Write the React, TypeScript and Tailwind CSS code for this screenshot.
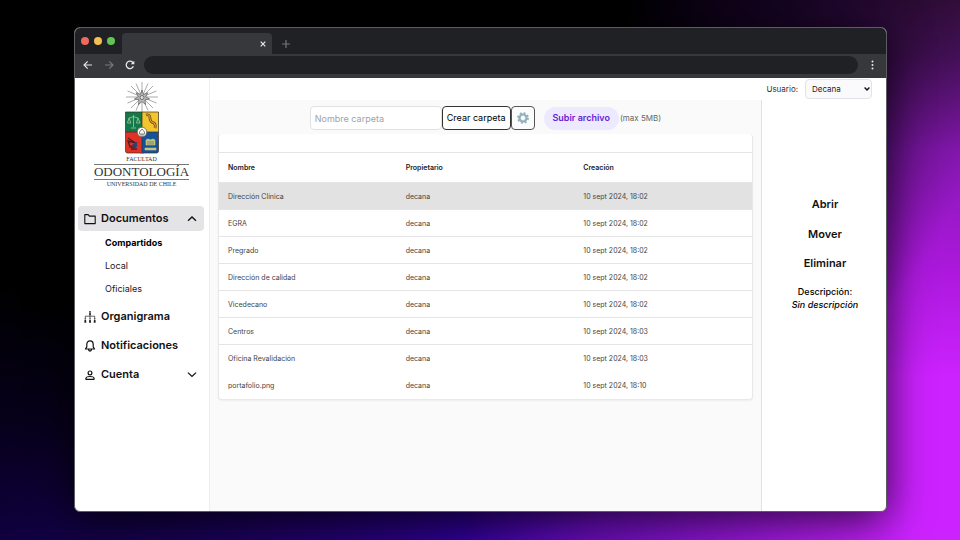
import { ReactNode } from "react";

const files = [
  { name: "Dirección Clínica", owner: "decana", created: "10 sept 2024, 18:02" },
  { name: "EGRA", owner: "decana", created: "10 sept 2024, 18:02" },
  { name: "Pregrado", owner: "decana", created: "10 sept 2024, 18:02" },
  { name: "Dirección de calidad", owner: "decana", created: "10 sept 2024, 18:02" },
  { name: "Vicedecano", owner: "decana", created: "10 sept 2024, 18:02" },
  { name: "Centros", owner: "decana", created: "10 sept 2024, 18:03" },
  { name: "Oficina Revalidación", owner: "decana", created: "10 sept 2024, 18:03" },
  { name: "portafolio.png", owner: "decana", created: "10 sept 2024, 18:10" },
];

function Chevron({ up = false }: { up?: boolean }) {
  return (
    <svg className="ml-auto size-3" viewBox="0 0 12 12" fill="none" stroke="#111" strokeWidth="1.3" aria-hidden="true">
      <path d={up ? "M2 7.8 6 4l4 3.8" : "M2 3.6 6 7.4l4-3.8"} />
    </svg>
  );
}

function FolderIcon() {
  return (
    <svg className="size-3" viewBox="0 0 12 12" fill="none" stroke="#111" strokeWidth="1.1" strokeLinejoin="round" aria-hidden="true">
      <path d="M.8 1.6h3.4l1.2 1.5h5.8v7.5H.8z" />
    </svg>
  );
}

function OrgIcon() {
  return (
    <svg className="size-3" viewBox="0 0 12 12" fill="none" stroke="#222" strokeWidth=".7" aria-hidden="true">
      <path d="M6 2v6M1.3 8V5.2h9.4V8" />
      <g fill="#222" stroke="none">
        <circle cx="6" cy=".9" r=".9" />
        <path d="M5 2.2h2l-.4 2H5.4zM.5 9h1.6l.2 2.8H.3zM5.2 9h1.6l.2 2.8H5zM9.9 9h1.6l.2 2.8H9.7z" />
        <circle cx="1.3" cy="7.9" r=".7" />
        <circle cx="6" cy="7.9" r=".7" />
        <circle cx="10.7" cy="7.9" r=".7" />
      </g>
    </svg>
  );
}

function BellIcon() {
  return (
    <svg className="size-3" viewBox="0 0 12 12" fill="none" stroke="#111" strokeWidth="1.2" strokeLinejoin="round" aria-hidden="true">
      <path d="M6 .9C4 .9 2.8 2.4 2.8 4.4v2.5L1.4 9h9.2L9.2 6.9V4.4C9.2 2.4 8 .9 6 .9ZM4.5 9.3c0 2.3 3 2.3 3 0" />
    </svg>
  );
}

function UserIcon() {
  return (
    <svg className="size-3" viewBox="0 0 12 12" fill="none" stroke="#111" strokeWidth="1.2" strokeLinejoin="round" aria-hidden="true">
      <circle cx="6" cy="3.9" r="1.9" />
      <path d="M1.9 10.3v-.9C1.9 8 3.6 7.5 6 7.5s4.1.5 4.1 1.9v.9z" />
    </svg>
  );
}

function GearIcon() {
  return (
    <svg className="size-3" viewBox="0 0 24 24" fill="none" aria-hidden="true">
      <circle cx="12" cy="12" r="10" stroke="#8fb0ba" strokeWidth="3.6" strokeDasharray="3.9 3.954" />
      <circle cx="12" cy="12" r="7" stroke="#8fb0ba" strokeWidth="4.4" />
      <circle cx="12" cy="12" r="4.8" stroke="#b9d0d6" strokeWidth=".8" />
    </svg>
  );
}

function Crest() {
  return (
    <svg className="h-18 w-12" viewBox="0 0 48 72" fill="none" aria-hidden="true">
      <g stroke="#555" strokeWidth=".5">
        <path d="M24 0v30M8 15h32M13 4l22 22M35 4 13 26M18 1.5l12 27M30 1.5l-12 27M9.5 9l29 12M38.5 9l-29 12" />
      </g>
      <path d="m24 8 1.5 4.5 4.3-1.8-2.2 4.1 4 2.2-4.6.7.5 4.8-3.5-3-3.5 3 .5-4.8-4.6-.7 4-2.2-2.2-4.1 4.3 1.8z" fill="#bbb" stroke="#444" strokeWidth=".6" />
      <circle cx="24" cy="15.5" r="2" fill="#ddd" stroke="#333" strokeWidth=".6" />
      <path d="M7.5 30H24v20H7.5z" fill="#12794a" />
      <path d="M24 30h16.5v20H24z" fill="#f0c52d" />
      <path d="M7.5 50H24v21H9.5q-2 0-2-2z" fill="#e03127" />
      <path d="M24 50h16.5v19q0 2-2 2H24z" fill="#14539b" />
      <path d="M7.5 30h33v39q0 2-2 2H26l-2 1-2-1H9.5q-2 0-2-2zM24 30v41M7.5 50h33" stroke="#3b2c20" strokeWidth=".7" />
      <path d="M15.5 33v12M11 36q4.5-2.5 9 0M11 36l-1.5 5h3.5zM20 36l-1.5 5H22zM13 46h5" stroke="#a9c99b" strokeWidth=".8" />
      <path d="M28 33q4-1 4 3t4 5q2 2 1 5" stroke="#654018" strokeWidth="2.6" />
      <path d="M28 33q4-1 4 3t4 5q2 2 1 5" stroke="#e9a33c" strokeWidth="1.1" />
      <path d="m10 56 9 6M10 59l8 2-1 4h-5zM13 67h6" stroke="#551b24" strokeWidth="1.3" />
      <path d="m12 64 7-4v5z" fill="#2b4370" />
      <path d="M28 58q2-2 4.5 0Q35 56 37 58v5h-9zM27 66h11v2H27z" fill="#b8c07b" stroke="#e3d078" strokeWidth=".5" />
      <path d="M29 60h7M29 62h7" stroke="#315c75" strokeWidth=".5" />
      <circle cx="24" cy="50" r="4.8" fill="#f7f7f2" stroke="#555" strokeWidth=".7" />
      <path d="m21.5 50 2.5-3 2.5 3v2h-5zM22 53h4" stroke="#555" strokeWidth=".7" />
    </svg>
  );
}

function NavItem({ icon, label, active, children }: { icon: ReactNode; label: string; active?: boolean; children?: ReactNode }) {
  return (
    <button
      type="button"
      className={`flex w-full items-center gap-[5px] rounded px-[6px] text-left text-[11px] font-semibold text-[#111] ${active ? "h-[25px] bg-[#e4e4e7]" : "h-[29px]"}`}
    >
      {icon}
      <span>{label}</span>
      {children}
    </button>
  );
}

function BrowserChrome() {
  return (
    <header className="bg-[#202124]">
      <div className="flex h-[26px] items-end">
        <div className="flex h-full w-[47px] items-center gap-[5px] pl-[6px]">
          <span className="size-2 rounded-full bg-[#ec6a5e]" />
          <span className="size-2 rounded-full bg-[#f4bf4f]" />
          <span className="size-2 rounded-full bg-[#61c554]" />
        </div>
        <div className="flex h-[21px] w-[150px] items-center justify-end rounded-t bg-[#37383c] pr-[5px]">
          <button type="button" aria-label="Cerrar pestaña" className="flex size-2 items-center justify-center">
            <svg className="size-2" viewBox="0 0 8 8" stroke="#e8e8e8" strokeWidth="1.2">
              <path d="m1.7 1.7 4.6 4.6M6.3 1.7 1.7 6.3" />
            </svg>
          </button>
        </div>
        <button type="button" aria-label="Nueva pestaña" className="ml-[9px] flex h-[21px] items-center">
          <svg className="size-[10px]" viewBox="0 0 10 10" stroke="#73757a" strokeWidth="1.2">
            <path d="M5 1v8M1 5h8" />
          </svg>
        </button>
      </div>
      <div className="flex h-6 items-center bg-[#37383c] pr-3 pb-[2px] pl-2">
        <button type="button" aria-label="Atrás">
          <svg className="size-[10px]" viewBox="0 0 10 10" fill="none" stroke="#e0e0e0" strokeWidth="1.2">
            <path d="M9 5H1M4.7 1.3 1 5l3.7 3.7" />
          </svg>
        </button>
        <button type="button" aria-label="Adelante" className="ml-[11px]">
          <svg className="size-[10px]" viewBox="0 0 10 10" fill="none" stroke="#77787c" strokeWidth="1.2">
            <path d="M1 5h8M5.3 1.3 9 5 5.3 8.7" />
          </svg>
        </button>
        <button type="button" aria-label="Recargar" className="ml-[11px]">
          <svg className="size-[10px]" viewBox="0 0 10 10" fill="none" stroke="#e8e8e8" strokeWidth="1.3">
            <path d="M8.4 6.2A3.7 3.7 0 1 1 7.6 2.3L8.8 3.3" />
            <path d="M9.3.7v3.6H5.7z" fill="#e8e8e8" stroke="none" />
          </svg>
        </button>
        <input aria-label="Dirección" className="ml-[9px] h-[18px] min-w-0 flex-1 rounded-full bg-[#202124] px-3 text-[8px] text-white outline-none" />
        <button type="button" aria-label="Menú" className="ml-[13px]">
          <svg className="h-[10px] w-[3px]" viewBox="0 0 3 10" fill="#e8e8e8">
            <circle cx="1.5" cy="1.5" r="1" />
            <circle cx="1.5" cy="5" r="1" />
            <circle cx="1.5" cy="8.5" r="1" />
          </svg>
        </button>
      </div>
    </header>
  );
}

function Sidebar() {
  return (
    <aside className="w-[135px] shrink-0 border-r border-[#ededed] pt-1 pr-1 pl-[3px]">
      <div className="flex flex-col items-center font-['Liberation_Serif',serif] text-[#333]">
        <Crest />
        <p className="mt-[2px] text-[6px] leading-[7px]">FACULTAD</p>
        <p className="mt-px border-y border-[#777] text-[13px] leading-[14px]">ODONTOLOGÍA</p>
        <p className="mt-px text-[6px] leading-[7px]">UNIVERSIDAD DE CHILE</p>
      </div>
      <nav className="mt-[18px] pr-px">
        <NavItem icon={<FolderIcon />} label="Documentos" active>
          <Chevron up />
        </NavItem>
        <ul className="pb-[2px] pl-[27px] text-[9px] leading-[23px] text-[#18181b]">
          <li><a href="#compartidos" className="font-bold text-black">Compartidos</a></li>
          <li><a href="#local">Local</a></li>
          <li><a href="#oficiales">Oficiales</a></li>
        </ul>
        <NavItem icon={<OrgIcon />} label="Organigrama" />
        <NavItem icon={<BellIcon />} label="Notificaciones" />
        <NavItem icon={<UserIcon />} label="Cuenta">
          <Chevron />
        </NavItem>
      </nav>
    </aside>
  );
}

function Toolbar() {
  return (
    <form className="flex h-6 items-center justify-center" onSubmit={(e) => e.preventDefault()}>
      <input
        aria-label="Nombre carpeta"
        placeholder="Nombre carpeta"
        className="h-6 w-[132px] rounded-sm border border-[#e2e2e4] bg-white px-1 text-[9px] outline-none placeholder:text-[#a1a1aa]"
      />
      <button type="submit" className="h-6 rounded-sm border border-[#333] bg-white px-1 text-[9px] whitespace-nowrap text-black">
        Crear carpeta
      </button>
      <button type="button" aria-label="Configuración" className="flex h-6 w-6 items-center justify-center rounded-sm border border-[#555] bg-[#fcfcfc]">
        <GearIcon />
      </button>
      <button type="button" className="ml-[9px] h-[23px] rounded-full bg-[#ede9fe] px-[9px] text-[9px] font-semibold whitespace-nowrap text-[#6524d4]">
        Subir archivo
      </button>
      <span className="pl-px text-[8px] whitespace-nowrap text-[#666]">(max 5MB)</span>
    </form>
  );
}

function FileTable() {
  return (
    <div className="mt-1 rounded-sm border-x border-b border-[#e8e8e8] bg-white pt-[18px] shadow-xs">
      <table className="w-full table-fixed border-collapse text-left text-[7px] leading-[10px] text-[#444]">
        <thead>
          <tr className="h-[30px] border-y border-[#e5e5e5] text-[#222]">
            <th scope="col" className="px-[9px] font-semibold">Nombre</th>
            <th scope="col" className="px-[9px] font-semibold">Propietario</th>
            <th scope="col" className="px-[9px] font-semibold">Creación</th>
          </tr>
        </thead>
        <tbody>
          {files.map((file, i) => (
            <tr key={file.name} className={`h-[27px] ${i === 0 ? "bg-[#e2e2e2]" : ""} ${i < 6 ? "border-b border-[#e5e5e5]" : ""}`}>
              <td className="px-[9px] pt-[2px]">{file.name}</td>
              <td className="px-[9px] pt-[2px]">{file.owner}</td>
              <td className="px-[9px] pt-[2px]">{file.created}</td>
            </tr>
          ))}
        </tbody>
      </table>
    </div>
  );
}

export default function App() {
  return (
    <div className="flex min-h-screen bg-[radial-gradient(ellipse_80%_104%_at_20%_0%,#000_0%,#000_56%,#000a_78%,#0000_106%),linear-gradient(to_right,#12004a_0%,#3500a8_48%,#5008a8cc_62%,#7010a000_95%),linear-gradient(to_bottom,#3a0f45_0%,#4c1262_10%,#8a18b8_28%,#a818d8_48%,#cc22ff_70%)] bg-black pt-[27px] pr-[73px] pb-7 pl-[74px] font-['Inter',sans-serif] text-black">
      <div className="flex flex-1 flex-col overflow-hidden rounded-md border border-[#5c5c61] bg-white shadow-[0_8px_44px_rgba(0,0,0,0.75)]">
        <BrowserChrome />
        <div className="flex flex-1">
          <Sidebar />
          <div className="flex min-w-0 flex-1 flex-col">
            <div className="flex h-[22px] items-center justify-end gap-[7px] pr-[14px] text-[8px] text-[#333]">
              <label htmlFor="user">Usuario:</label>
              <div className="relative">
                <select id="user" className="block h-5 w-[67px] appearance-none rounded-sm border border-[#e2e2e8] bg-[#fafafc] px-[6px] text-[8px] text-[#222]">
                  <option>Decana</option>
                </select>
                <svg className="pointer-events-none absolute top-[7px] right-[2px] size-[6px]" viewBox="0 0 6 6" fill="none" stroke="#111" strokeWidth="1.4" aria-hidden="true">
                  <path d="m.6 1.6 2.4 2.4 2.4-2.4" />
                </svg>
              </div>
            </div>
            <div className="flex flex-1">
              <main className="min-w-0 flex-1 bg-[#fafafa] px-2 pt-[6px]">
                <Toolbar />
                <FileTable />
              </main>
              <aside className="flex w-[125px] shrink-0 flex-col items-center border-l border-[#e2e2e2] pt-[90px] pl-[2px]">
                <button type="button" className="h-[29px] text-[11px] font-semibold text-[#111]">Abrir</button>
                <button type="button" className="h-[30px] text-[11px] font-semibold text-[#111]">Mover</button>
                <button type="button" className="h-[29px] text-[11px] font-semibold text-[#111]">Eliminar</button>
                <p className="mt-[7px] text-center text-[9px] leading-[13px] font-medium">
                  Descripción:
                  <br />
                  <em>Sin descripción</em>
                </p>
              </aside>
            </div>
          </div>
        </div>
      </div>
    </div>
  );
}
